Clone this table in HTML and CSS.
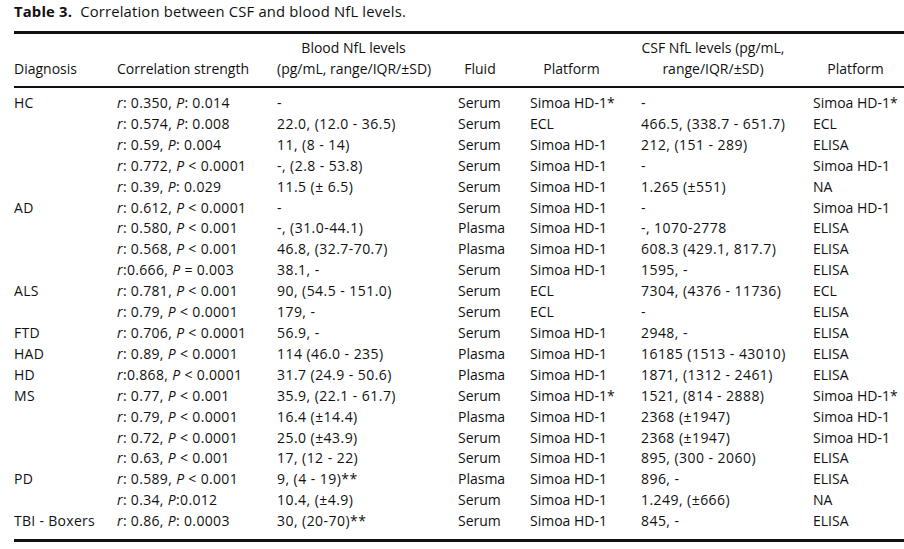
FILE: index.html
```html
<!DOCTYPE html>
<html>
<head>
<meta charset="utf-8">
<link rel="stylesheet" href="styles.css">
</head>
<body>
<div class="page">
  <p class="caption"><b>Table 3.</b>&nbsp; Correlation between CSF and blood NfL levels.</p>
  <div class="clip">
    <table class="nfl">
      <colgroup>
        <col class="c1"><col class="c2"><col class="c3"><col class="c4"><col class="c5"><col class="c6"><col class="c7">
      </colgroup>
      <thead>
        <tr>
          <th class="left">Diagnosis</th>
          <th>Correlation strength</th>
          <th>Blood NfL levels<br>(pg/mL, range/IQR/±SD)</th>
          <th>Fluid</th>
          <th>Platform</th>
          <th>CSF NfL levels (pg/mL,<br>range/IQR/±SD)</th>
          <th>Platform</th>
        </tr>
      </thead>
      <tbody>
        <tr><td>HC</td><td><i>r</i>: 0.350, <i>P</i>: 0.014</td><td>-</td><td>Serum</td><td>Simoa HD-1*</td><td>-</td><td>Simoa HD-1*</td></tr>
        <tr><td></td><td><i>r</i>: 0.574, <i>P</i>: 0.008</td><td>22.0, (12.0 - 36.5)</td><td>Serum</td><td>ECL</td><td>466.5, (338.7 - 651.7)</td><td>ECL</td></tr>
        <tr><td></td><td><i>r</i>: 0.59, <i>P</i>: 0.004</td><td>11, (8 - 14)</td><td>Serum</td><td>Simoa HD-1</td><td>212, (151 - 289)</td><td>ELISA</td></tr>
        <tr><td></td><td><i>r</i>: 0.772, <i>P</i> &lt; 0.0001</td><td>-, (2.8 - 53.8)</td><td>Serum</td><td>Simoa HD-1</td><td>-</td><td>Simoa HD-1</td></tr>
        <tr><td></td><td><i>r</i>: 0.39, <i>P</i>: 0.029</td><td>11.5 (± 6.5)</td><td>Serum</td><td>Simoa HD-1</td><td>1.265 (±551)</td><td>NA</td></tr>
        <tr><td>AD</td><td><i>r</i>: 0.612, <i>P</i> &lt; 0.0001</td><td>-</td><td>Serum</td><td>Simoa HD-1</td><td>-</td><td>Simoa HD-1</td></tr>
        <tr><td></td><td><i>r</i>: 0.580, <i>P</i> &lt; 0.001</td><td>-, (31.0-44.1)</td><td>Plasma</td><td>Simoa HD-1</td><td>-, 1070-2778</td><td>ELISA</td></tr>
        <tr><td></td><td><i>r</i>: 0.568, <i>P</i> &lt; 0.001</td><td>46.8, (32.7-70.7)</td><td>Plasma</td><td>Simoa HD-1</td><td>608.3 (429.1, 817.7)</td><td>ELISA</td></tr>
        <tr><td></td><td><i>r</i>:0.666, <i>P</i> = 0.003</td><td>38.1, -</td><td>Serum</td><td>Simoa HD-1</td><td>1595, -</td><td>ELISA</td></tr>
        <tr><td>ALS</td><td><i>r</i>: 0.781, <i>P</i> &lt; 0.001</td><td>90, (54.5 - 151.0)</td><td>Serum</td><td>ECL</td><td>7304, (4376 - 11736)</td><td>ECL</td></tr>
        <tr><td></td><td><i>r</i>: 0.79, <i>P</i> &lt; 0.0001</td><td>179, -</td><td>Serum</td><td>ECL</td><td>-</td><td>ELISA</td></tr>
        <tr><td>FTD</td><td><i>r</i>: 0.706, <i>P</i> &lt; 0.0001</td><td>56.9, -</td><td>Serum</td><td>Simoa HD-1</td><td>2948, -</td><td>ELISA</td></tr>
        <tr><td>HAD</td><td><i>r</i>: 0.89, <i>P</i> &lt; 0.0001</td><td>114 (46.0 - 235)</td><td>Plasma</td><td>Simoa HD-1</td><td>16185 (1513 - 43010)</td><td>ELISA</td></tr>
        <tr><td>HD</td><td><i>r</i>:0.868, <i>P</i> &lt; 0.0001</td><td>31.7 (24.9 - 50.6)</td><td>Plasma</td><td>Simoa HD-1</td><td>1871, (1312 - 2461)</td><td>ELISA</td></tr>
        <tr><td>MS</td><td><i>r</i>: 0.77, <i>P</i> &lt; 0.001</td><td>35.9, (22.1 - 61.7)</td><td>Serum</td><td>Simoa HD-1*</td><td>1521, (814 - 2888)</td><td>Simoa HD-1*</td></tr>
        <tr><td></td><td><i>r</i>: 0.79, <i>P</i> &lt; 0.0001</td><td>16.4 (±14.4)</td><td>Plasma</td><td>Simoa HD-1</td><td>2368 (±1947)</td><td>Simoa HD-1</td></tr>
        <tr><td></td><td><i>r</i>: 0.72, <i>P</i> &lt; 0.0001</td><td>25.0 (±43.9)</td><td>Serum</td><td>Simoa HD-1</td><td>2368 (±1947)</td><td>Simoa HD-1</td></tr>
        <tr><td></td><td><i>r</i>: 0.63, <i>P</i> &lt; 0.001</td><td>17, (12 - 22)</td><td>Serum</td><td>Simoa HD-1</td><td>895, (300 - 2060)</td><td>ELISA</td></tr>
        <tr><td>PD</td><td><i>r</i>: 0.589, <i>P</i> &lt; 0.001</td><td>9, (4 - 19)**</td><td>Plasma</td><td>Simoa HD-1</td><td>896, -</td><td>ELISA</td></tr>
        <tr><td></td><td><i>r</i>: 0.34, <i>P</i>:0.012</td><td>10.4, (±4.9)</td><td>Serum</td><td>Simoa HD-1</td><td>1.249, (±666)</td><td>NA</td></tr>
        <tr><td>TBI - Boxers</td><td><i>r</i>: 0.86, <i>P</i>: 0.0003</td><td>30, (20-70)**</td><td>Serum</td><td>Simoa HD-1</td><td>845, -</td><td>ELISA</td></tr>
      </tbody>
    </table>
  </div>
</div>
</body>
</html>
```
FILE: styles.css
```css
html, body {
  margin: 0;
  padding: 0;
  background: #fff;
}
body {
  font-family: "Open Sans", "Noto Sans", sans-serif;
  font-size: 14px;
  color: #111;
  overflow: hidden;
}
.page {
  padding: 1px 0 0 14px;
}
.caption {
  margin: 0 0 9px 0;
  font-size: 14.8px;
  letter-spacing: 0.18px;
  line-height: 21px;
  white-space: nowrap;
}
.caption b {
  font-weight: 700;
}
.clip {
  width: 890px;
  overflow: hidden;
}
.nfl {
  width: 912px;
  table-layout: fixed;
  border-collapse: collapse;
  border-top: 3px solid #111;
  border-bottom: 3px solid #111;
}
.c1 { width: 103px; }
.c2 { width: 160px; }
.c3 { width: 181px; }
.c4 { width: 72px; }
.c5 { width: 111px; }
.c6 { width: 172px; }
.c7 { width: 113px; }
.nfl th {
  font-weight: 400;
  line-height: 21px;
  text-align: center;
  vertical-align: bottom;
  padding: 3px 28px 7px 0;
  border-bottom: 2px solid #111;
  white-space: nowrap;
}
.nfl th.left {
  text-align: left;
}
.nfl td {
  padding: 0;
  line-height: 20.9px;
  white-space: nowrap;
  vertical-align: top;
}
.nfl td:nth-child(1) {
  letter-spacing: 0.3px;
}
.nfl td:nth-child(2) {
  letter-spacing: 0.33px;
}
.nfl td:nth-child(3),
.nfl td:nth-child(6) {
  letter-spacing: 0.45px;
}
.nfl tbody tr:first-child td {
  padding-top: 5px;
}
.nfl tbody tr:last-child td {
  padding-bottom: 7px;
}
.nfl i {
  font-style: italic;
}
```
